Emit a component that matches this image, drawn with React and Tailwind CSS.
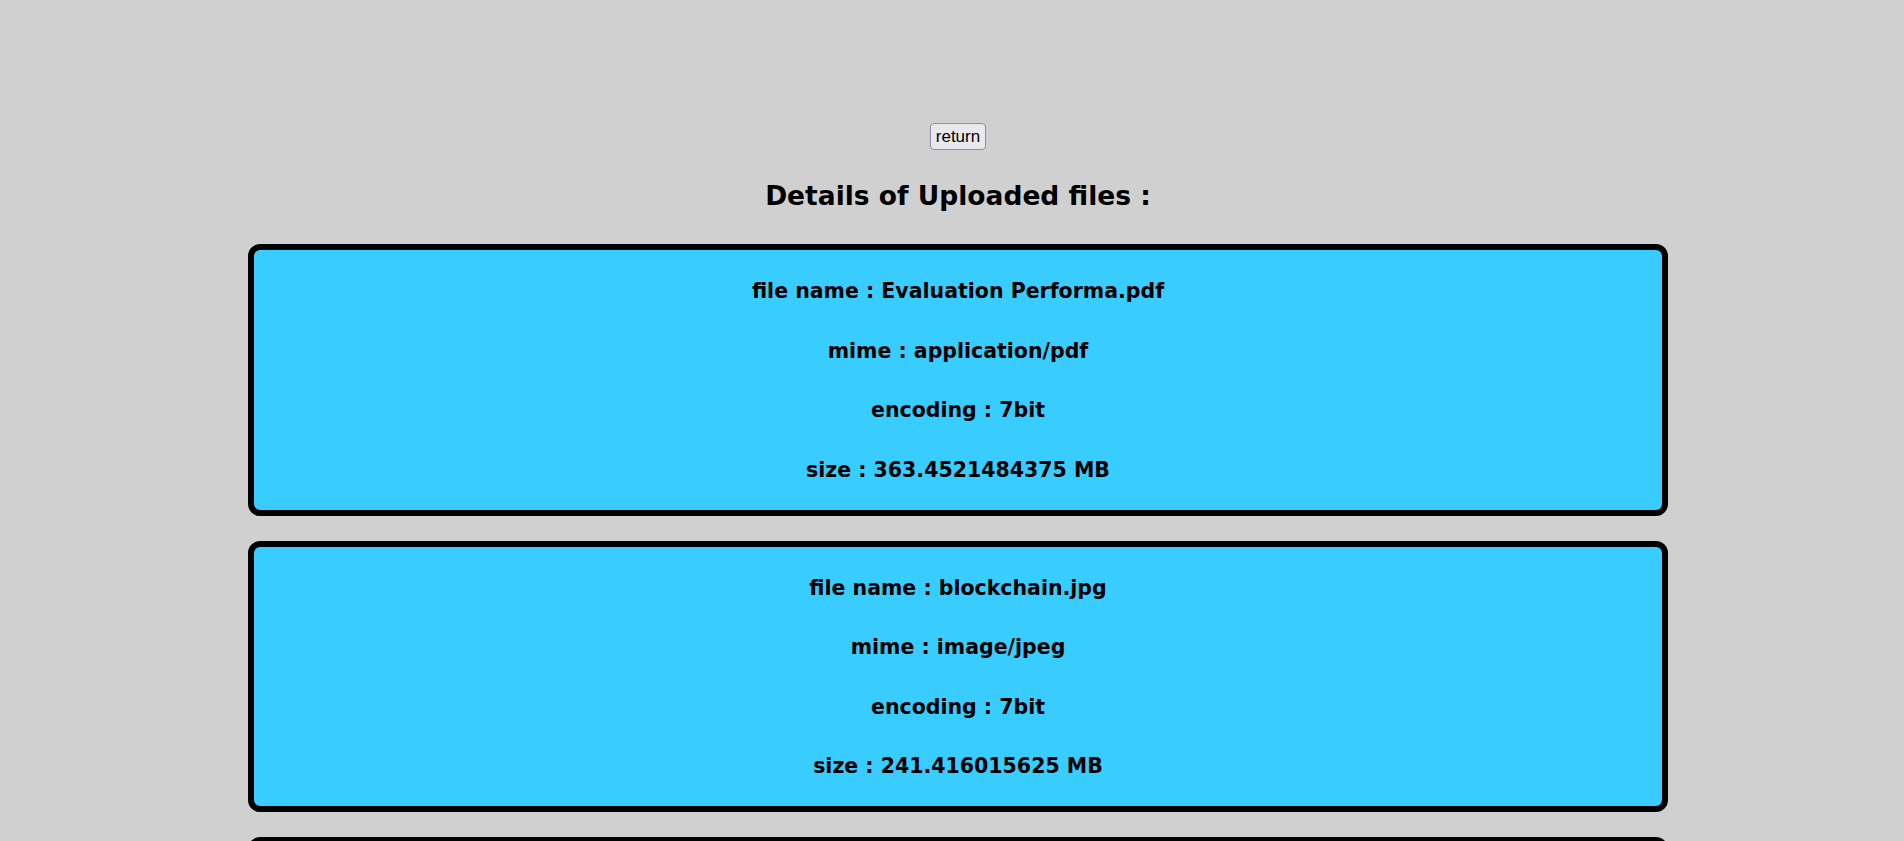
const files = [
  { name: "Evaluation Performa.pdf", mime: "application/pdf", encoding: "7bit", size: "363.4521484375" },
  { name: "blockchain.jpg", mime: "image/jpeg", encoding: "7bit", size: "241.416015625" },
  { name: "notes.txt", mime: "text/plain", encoding: "7bit", size: "12.5" },
];

function FileCard({ file }) {
  return (
    <div className="border-[6px] border-black rounded-[12px] bg-[#39ccff] pt-[29px] pb-[28px] flex flex-col items-center gap-[35.5px] text-[20.5px] leading-[24px] font-bold text-black">
      <p>file name : {file.name}</p>
      <p>mime : {file.mime}</p>
      <p>encoding : {file.encoding}</p>
      <p>size : {file.size} MB</p>
    </div>
  );
}

export default function App() {
  return (
    <div className="min-h-screen bg-[#d0d0d0] pl-[12px] font-['DejaVu_Sans',sans-serif]">
      <div className="mx-auto w-[1420px] pt-[123px] flex flex-col items-center">
        <button className="h-[27px] px-[5px] bg-[#e9e9ed] border border-[#8f8f9d] rounded-[4px] text-[17px] leading-[20px] text-black font-['Liberation_Sans',Arial,sans-serif]">
          return
        </button>
        <h2 className="mt-[30px] text-[26.5px] leading-[32px] font-bold text-black">Details of Uploaded files :</h2>
        <div className="mt-[32px] w-full flex flex-col gap-[25px]">
          {files.map((f) => (
            <FileCard key={f.name} file={f} />
          ))}
        </div>
      </div>
    </div>
  );
}
